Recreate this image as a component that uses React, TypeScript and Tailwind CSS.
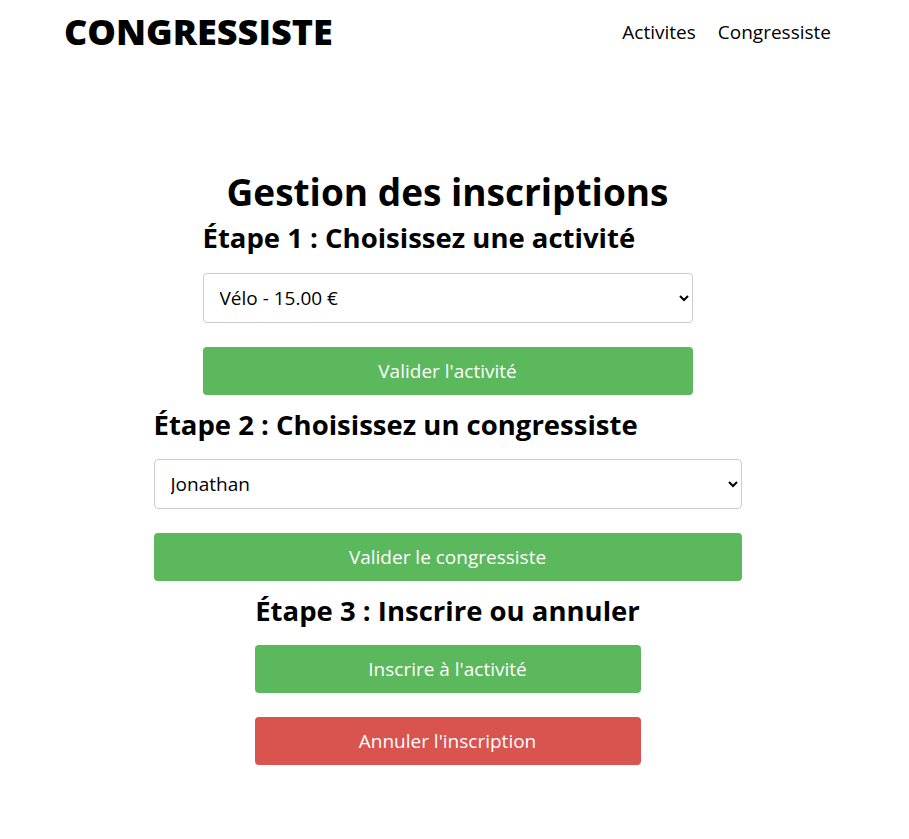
import React from 'react';

const font = { fontFamily: '"Open Sans", "Liberation Sans", sans-serif' };

const Header = () => (
  <header className="flex items-center justify-between h-16 pl-[64px] pr-[78px]">
    <h1 className="text-[36px] font-extrabold text-black">CONGRESSISTE</h1>
    <nav className="flex items-center gap-[22px] text-[19px] text-black">
      <a href="#">Activites</a>
      <a href="#">Congressiste</a>
    </nav>
  </header>
);

const GreenButton = ({ label }: { label: string }) => (
  <button className="w-full h-12 rounded bg-[#5cb85c] text-white text-[19px]">{label}</button>
);

export default function App() {
  return (
    <div className="min-h-screen bg-white text-black" style={font}>
      <Header />
      <main className="w-[895px] flex flex-col items-center pt-[104px]">
        <h2 className="text-[37px] font-bold leading-[48px]">Gestion des inscriptions</h2>

        {/* Etape 1 */}
        <section className="w-[490px] flex flex-col">
          <h3 className="text-[27.5px] font-bold leading-[44px]">Étape 1 : Choisissez une activité</h3>
          <select className="mt-[13px] h-[50px] w-full border border-[#cccccc] rounded px-3 text-[19px] bg-white">
            <option>Vélo - 15.00 €</option>
          </select>
          <div className="mt-6">
            <GreenButton label="Valider l'activité" />
          </div>
        </section>

        {/* Etape 2 */}
        <section className="w-[588px] flex flex-col mt-2">
          <h3 className="text-[27.5px] font-bold leading-[44px]">Étape 2 : Choisissez un congressiste</h3>
          <select className="mt-[12px] h-[50px] w-full border border-[#cccccc] rounded px-3 text-[19px] bg-white">
            <option>Jonathan</option>
          </select>
          <div className="mt-6">
            <GreenButton label="Valider le congressiste" />
          </div>
        </section>

        {/* Etape 3 */}
        <section className="w-[386px] flex flex-col mt-2">
          <h3 className="text-[27.5px] font-bold leading-[44px] text-center">Étape 3 : Inscrire ou annuler</h3>
          <div className="mt-[12px]">
            <GreenButton label="Inscrire à l'activité" />
          </div>
          <button className="mt-6 w-full h-12 rounded bg-[#d9534f] text-white text-[19px]">Annuler l'inscription</button>
        </section>
      </main>
    </div>
  );
}
